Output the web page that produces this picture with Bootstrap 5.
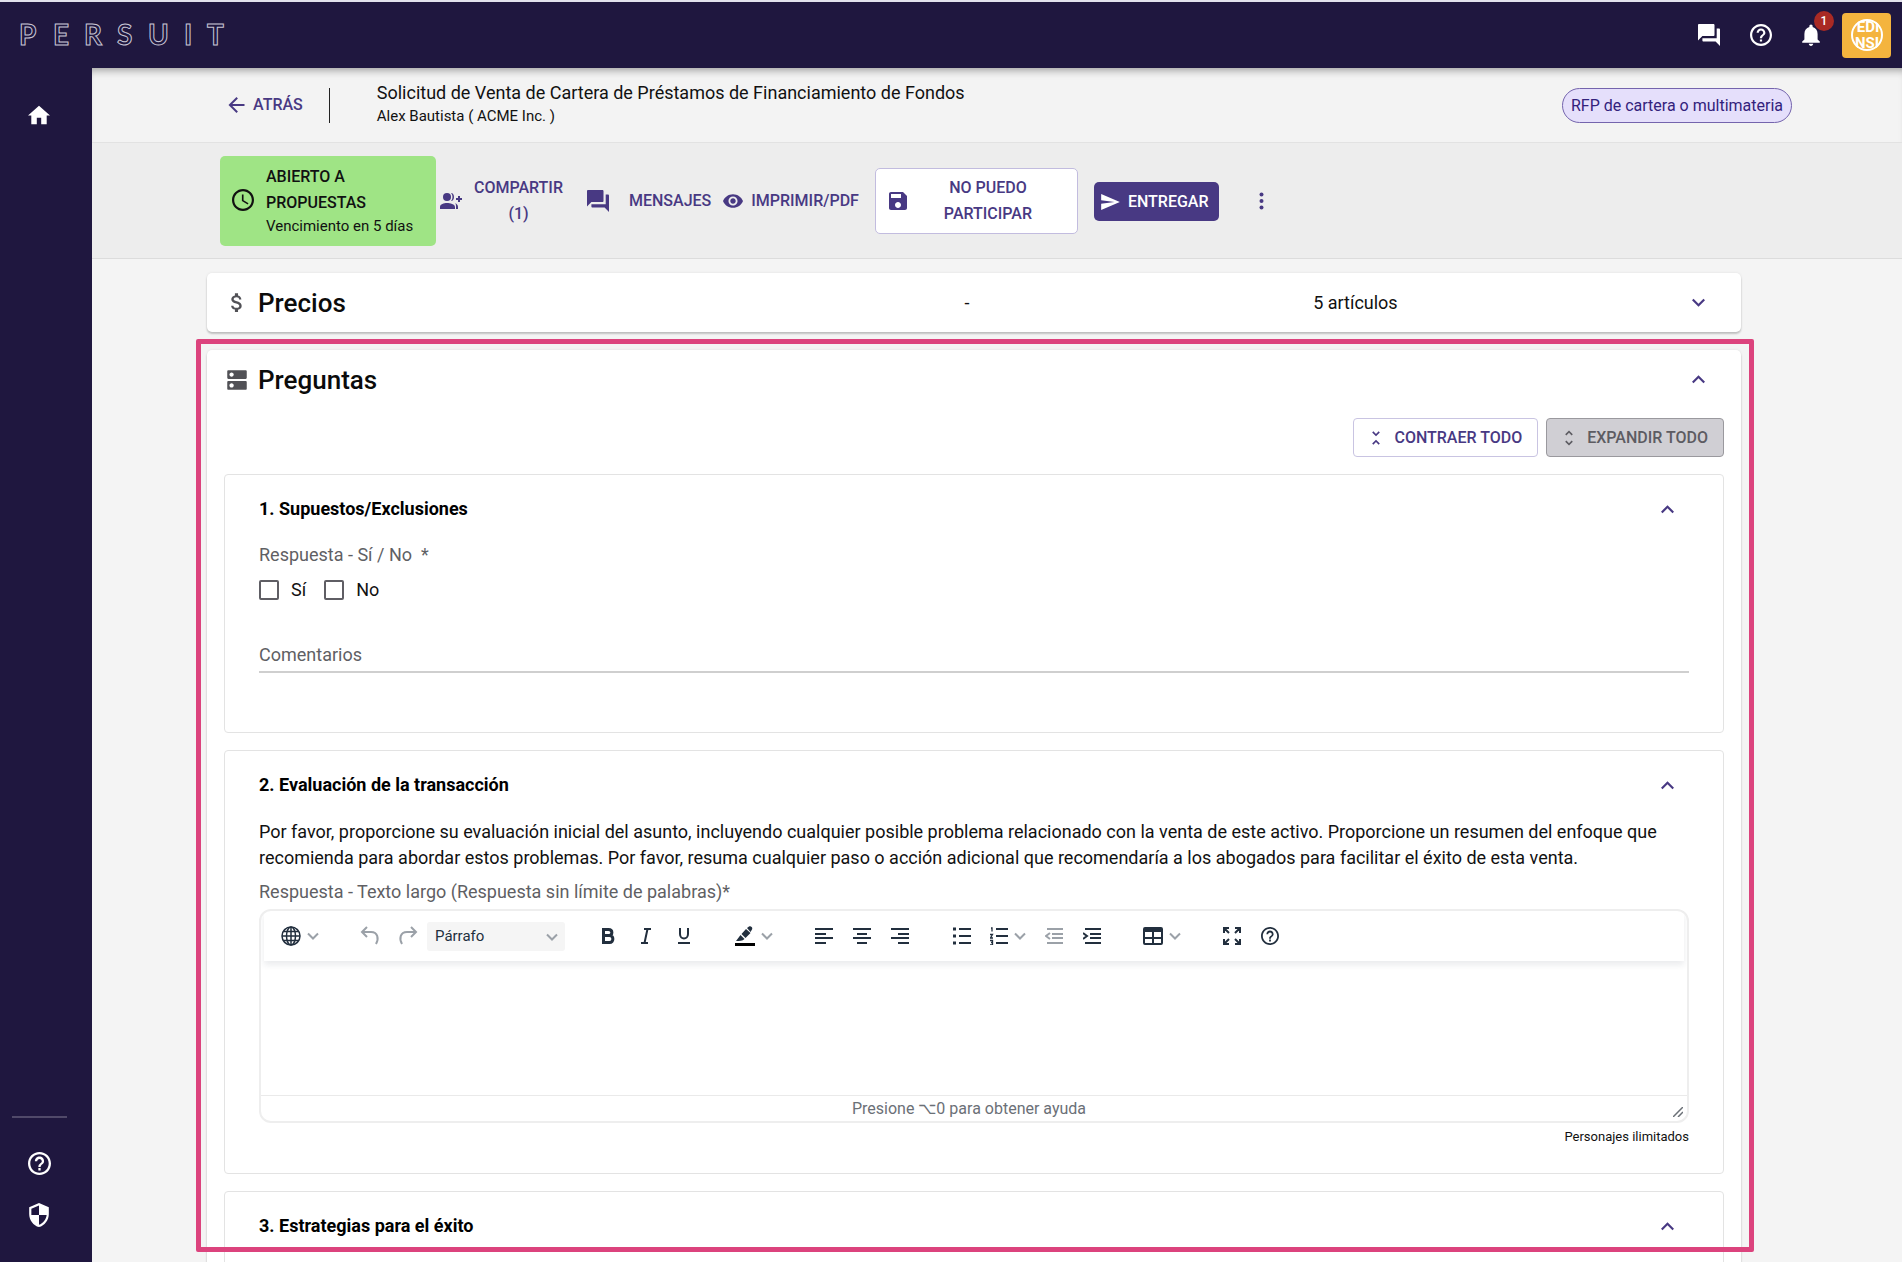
<!DOCTYPE html>
<html lang="es">
<head>
<meta charset="utf-8">
<meta name="viewport" content="width=device-width, initial-scale=1">
<title>Persuit</title>
<link href="https://cdn.jsdelivr.net/npm/bootstrap@5.3.0/dist/css/bootstrap.min.css" rel="stylesheet">
<style>
:root { --ink:#1f173f; --brand:#483983; --pink:#dc437d; --tool:#222f3e; }
body { font-family:Roboto,"Liberation Sans",sans-serif; font-size:18px; line-height:26px; color:#111; background:#f4f4f4; }
button, input, select, textarea { font-family:inherit; }
svg { display:block; flex:none; fill:currentColor; }
.app { height:100vh; border-top:2px solid #e2e1ec; border-bottom:2px solid #fff; overflow:hidden; }
.topbar { background:var(--ink); height:66px; padding:0 11px 0 16px; color:#fff; flex:none; }
.shell { flex:1; min-height:0; }
.top-icons { gap:22px; }
.plain { background:none; border:0; padding:0; color:inherit; }
.alerts { position:relative; }
.count { position:absolute; top:-13px; right:-14px; width:20px; height:20px; border-radius:50%; background:#a92a24; font-size:12px; line-height:20px; font-weight:500; text-align:center; }
.avatar-tile { width:49px; height:45px; border-radius:4px; background:#f4b43e; }
.side { width:92px; background:var(--ink); color:#fff; padding:37px 14px 35px 0; flex:none; }
.side hr { width:55px; margin:0 0 34px; border-color:#fff; opacity:.22; border-top-width:2px; }
.workspace { min-width:0; }
.headline { background:#f3f3f3; height:75px; padding:0 110px 0 136px; border-bottom:1px solid #e2e2e2; box-shadow:inset 0 8px 8px -6px rgba(0,0,0,.38); flex:none; }
.back-link { color:var(--brand); font-size:16px; font-weight:500; text-decoration:none; }
.rule { width:1px; height:35px; background:#222; margin:0 47px 0 26px; }
.sub { font-size:15px; line-height:20px; }
.chip { border:1px solid #7464ad; background:#e5dffb; color:#33227c; border-radius:18px; padding:4px 8px; font-size:16px; line-height:25px; }
.actions { background:#ededed; padding:13px 128px 12px; border-bottom:1px solid #dcdcdc; flex:none; color:var(--brand); font-size:16px; font-weight:500; }
.status { background:#9fe485; color:#111; border-radius:5px; width:216px; padding:8px 12px 10px; }
.status .sub { font-weight:400; }
.act { color:inherit; font-weight:500; font-size:16px; line-height:26px; background:none; border:0; padding:0; display:flex; align-items:center; }
.share { margin-right:20px; }
.messages { gap:20px; margin-right:12px; }
.act.outlined { background:#fff; border:1px solid #c2bcdf; border-radius:5px; width:203px; padding:6px 32px 6px 13px; }
.act.filled { background:var(--brand); color:#fff; border-radius:5px; padding:7px 10px 6px 7px; }
.content { position:relative; flex:1; min-height:0; overflow:hidden; padding:14px 161px 0 115px; }
.frame { position:absolute; top:80px; right:148px; bottom:10px; left:104px; border:5px solid var(--pink); border-radius:2px; pointer-events:none; }
.panel { background:#fff; border-radius:5px; box-shadow:0 2px 2px rgba(0,0,0,.2), 0 0 3px rgba(0,0,0,.08); }
.panel + .panel { margin-top:18px; }
.panel-head { height:59px; padding:0 36px 0 17px; }
.summary { display:grid; grid-template-columns:50% 23% 1fr auto; align-items:center; }
.panel h2 { font-size:26px; line-height:30px; font-weight:500; margin:0; color:#0b0b0b; }
.gray { color:#515156; }
.bulk { gap:8px; padding:9px 17px 17px; }
.violet { color:var(--brand); }
.toggle { border:1px solid #c9c4e2; border-radius:4px; background:#fff; color:var(--brand); font-size:16px; font-weight:500; line-height:26px; padding:6px 15px 5px 12px; display:flex; align-items:center; gap:8px; }
.toggle:disabled { background:#d0cfd4; border-color:#9a999e; color:#5d5c62; }
.question { border:1px solid #e3e3e3; border-radius:4px; padding:21px 34px; margin:0 17px 17px; }
.question h3 { font-size:18px; line-height:26px; font-weight:700; margin:0; color:#000; }
.q-head { padding-right:15px; }
.hint { color:#5f5f64; }
.answer { margin-top:20px; }
.ticks { gap:18px; margin-top:9px; }
.tick { appearance:none; width:20px; height:20px; border:2px solid #5f5e64; border-radius:2px; margin:0 12px 0 0; background:#fff; }
.field { display:grid; margin:36px 0 38px; }
.field > * { grid-area:1 / 1; }
.field label { pointer-events:none; line-height:32px; }
.comment { width:100%; border:0; border-bottom:2px solid #cfcfcf; padding:0; height:34px; background:none; color:inherit; }
.brief { margin:21px 0 8px; }
.editor { border:2px solid #eee; border-radius:12px; margin-top:4px; overflow:hidden; }
.tools { height:50px; padding-left:9px; color:var(--tool); box-shadow:0 4px 6px rgba(34,47,62,.09); gap:24px; margin:0 3px; position:relative; }
.tool { background:none; border:0; padding:0; width:38px; height:34px; display:flex; align-items:center; justify-content:center; color:inherit; }
.tool.split { width:54px; gap:6px; }
.tool:disabled { color:#9ba1a8; }
.chev { fill:none; stroke:#9ba1a8; stroke-width:2; }
.style-box { position:relative; }
.style-pick { appearance:none; display:block; width:138px; height:29px; border:0; border-radius:3px; background:#f5f5f5; color:var(--tool); font-size:15px; line-height:29px; padding:0 30px 0 8px; }
.style-box svg { position:absolute; right:7px; top:11px; pointer-events:none; }
.writing { display:block; width:100%; height:134px; border:0; resize:none; padding:12px; outline:0; background:none; }
.foot { border-top:1px solid #eaeaea; font-size:16px; line-height:25px; color:#6b7077; padding:0 4px; }
.resize { align-self:flex-end; margin-bottom:4px; }
.limit { font-size:13px; line-height:26px; margin:1px 0 2px; }
.line { fill:none; stroke:currentColor; stroke-width:2; }
.last { margin-bottom:0; padding-bottom:120px; }
</style>
<script src="https://cdn.jsdelivr.net/npm/bootstrap@5.3.0/dist/js/bootstrap.bundle.min.js"></script>
</head>
<body>
<svg width="0" height="0" class="position-absolute" aria-hidden="true">
<symbol id="chat" viewBox="2 2 20 20"><path d="M21 6h-2v9H6v2c0 .55.45 1 1 1h11l4 4V7c0-.55-.45-1-1-1zm-4 6V3c0-.55-.45-1-1-1H3c-.55 0-1 .45-1 1v14l4-4h10c.55 0 1-.45 1-1z"/></symbol>
<symbol id="help" viewBox="2 2 20 20"><path d="M11 18h2v-2h-2v2zm1-16C6.480 2 2 6.480 2 12s4.480 10 10 10 10-4.480 10-10S17.520 2 12 2zm0 18c-4.410 0-8-3.590-8-8s3.590-8 8-8 8 3.590 8 8-3.590 8-8 8zm0-14c-2.210 0-4 1.790-4 4h2c0-1.100.9-2 2-2s2 .9 2 2c0 2-3 1.750-3 5h2c0-2.250 3-2.500 3-5 0-2.210-1.790-4-4-4z"/></symbol>
<symbol id="up" viewBox="6 8 12 8"><path d="M12 8l-6 6 1.410 1.410L12 10.830l4.590 4.580L18 14z"/></symbol>
<symbol id="down" viewBox="6 8 12 8"><path d="M16.590 8.590 12 13.170 7.410 8.590 6 10l6 6 6-6z"/></symbol>
<symbol id="chev" viewBox="0 0 12 8"><path d="M1 1.500l5 5 5-5"/></symbol>
</svg>

<div class="app d-flex flex-column">
<header class="topbar d-flex align-items-center justify-content-between">
  <svg width="214" height="34" role="img" aria-label="PERSUIT"><text x="3 37 68 101 132 168 191" y="27" font-family="Lato" font-weight="700" font-size="28" fill="none" stroke="#c9c6d6" stroke-width="1">PERSUIT</text></svg>
  <div class="top-icons d-flex align-items-center">
    <button class="plain me-2" aria-label="Mensajes"><svg width="22" height="22"><use href="#chat"/></svg></button>
    <button class="plain me-2" aria-label="Ayuda"><svg width="22" height="22"><use href="#help"/></svg></button>
    <button class="plain alerts" aria-label="Notificaciones"><svg width="18" height="22" viewBox="4 2 16 20"><path d="M12 22c1.100 0 2-.9 2-2h-4c0 1.100.890 2 2 2zm6-6v-5c0-3.070-1.640-5.640-4.500-6.320V4c0-.830-.670-1.500-1.500-1.500s-1.500.670-1.500 1.500v.680C7.630 5.360 6 7.920 6 11v5l-2 2v1h16v-1l-2-2z"/></svg><span class="count">1</span></button>
    <button class="plain avatar-tile d-flex align-items-center justify-content-center" aria-label="Cuenta"><svg width="34" height="34" viewBox="0 0 34 34"><defs><clipPath id="disc"><circle cx="17" cy="17" r="16"/></clipPath></defs><circle cx="17" cy="17" r="15" fill="none" stroke="#fff" stroke-width="2"/><g clip-path="url(#disc)" fill="#fff" font-size="15" font-weight="700" text-anchor="middle"><text x="18" y="14">EDI</text><text x="17" y="30">NSI</text></g></svg></button>
  </div>
</header>

<div class="shell d-flex">
<nav class="side d-flex flex-column align-items-center">
  <a href="#" class="text-white" aria-label="Inicio"><svg width="22" height="20" viewBox="2 3 20 17"><path d="M10 20v-6h4v6h5v-8h3L12 3 2 12h3v8z"/></svg></a>
  <hr class="mt-auto">
  <a href="#" class="text-white mb-4" aria-label="Ayuda"><svg width="23" height="23"><use href="#help"/></svg></a>
  <a href="#" class="text-white pt-1" aria-label="Seguridad"><svg width="20" height="24" viewBox="3 1 18 22"><path d="M12 1 3 5v6c0 5.550 3.840 10.740 9 12 5.160-1.260 9-6.450 9-12V5l-9-4zm0 10.990h7c-.530 4.120-3.280 7.790-7 8.940V12H5V6.300l7-3.110v8.800z"/></svg></a>
</nav>

<main class="workspace flex-grow-1 d-flex flex-column">
  <div class="headline d-flex align-items-center">
    <a href="#" class="back-link d-flex align-items-center gap-2"><svg width="17" height="16" viewBox="4 4 16 16"><path d="M20 11H7.830l5.590-5.590L12 4l-8 8 8 8 1.410-1.410L7.830 13H20v-2z"/></svg>ATRÁS</a>
    <div class="rule"></div>
    <div class="pb-1">
      <div>Solicitud de Venta de Cartera de Préstamos de Financiamiento de Fondos</div>
      <div class="sub">Alex Bautista ( ACME Inc. )</div>
    </div>
    <span class="chip ms-auto">RFP de cartera o multimateria</span>
  </div>

  <div class="actions d-flex align-items-center">
    <div class="status d-flex align-items-center">
      <svg width="22" height="22" viewBox="2 2 20 20" class="me-2"><path d="M11.990 2C6.470 2 2 6.480 2 12s4.470 10 9.990 10C17.520 22 22 17.520 22 12S17.520 2 11.990 2zM12 20c-4.420 0-8-3.580-8-8s3.580-8 8-8 8 3.580 8 8-3.580 8-8 8zm.5-13H11v6l5.250 3.150.750-1.230-4.500-2.670z"/></svg>
      <div class="ps-1">ABIERTO A<br>PROPUESTAS<div class="sub">Vencimiento en 5 días</div></div>
    </div>
    <button class="act share ms-1"><svg width="22" height="16" viewBox="0 0 22 16" class="me-2"><circle cx="7" cy="4" r="4"/><path d="M0 16v-2c0-3 4-4 7-4s8 1 8 4v2zM11 0c4 0 4 8 0 8 2-2 2-6 0-8zM15 10c2 1 3 2 3 4v2h-2v-2c0-2 0-3-1-4zM18 3h2v2h2v2h-2v2h-2V7h-2V5h2z"/></svg><span class="px-1">COMPARTIR<br>(1)</span></button>
    <button class="act messages"><svg width="22" height="22"><use href="#chat"/></svg>MENSAJES</button>
    <button class="act me-3"><svg width="20" height="14" viewBox="1 4.500 22 15" class="me-2"><path d="M12 4.500C7 4.500 2.730 7.610 1 12c1.730 4.390 6 7.500 11 7.500s9.270-3.110 11-7.500c-1.730-4.390-6-7.500-11-7.500zM12 17c-2.760 0-5-2.240-5-5s2.240-5 5-5 5 2.240 5 5-2.240 5-5 5zm0-8c-1.660 0-3 1.340-3 3s1.340 3 3 3 3-1.340 3-3-1.340-3-3-3z"/></svg>IMPRIMIR/PDF</button>
    <button class="act outlined me-3"><svg width="18" height="18" viewBox="3 3 18 18"><path d="M17 3H5c-1.110 0-2 .9-2 2v14c0 1.100.890 2 2 2h14c1.100 0 2-.9 2-2V7l-4-4zm-5 16c-1.660 0-3-1.340-3-3s1.340-3 3-3 3 1.340 3 3-1.340 3-3 3zm3-10H5V5h10v4z"/></svg><span class="flex-grow-1 ps-4">NO PUEDO<br>PARTICIPAR</span></button>
    <button class="act filled"><svg width="19" height="16" viewBox="2 3 21 18" class="me-2"><path d="M2.010 21 23 12 2.010 3 2 10l15 2-15 2z"/></svg>ENTREGAR</button>
    <button class="act ms-4 px-3" aria-label="Más opciones"><svg width="5" height="18" viewBox="0 0 5 18"><circle cx="2.500" cy="2.500" r="2"/><circle cx="2.500" cy="9" r="2"/><circle cx="2.500" cy="15.500" r="2"/></svg></button>
  </div>

  <div class="content">
    <section class="panel panel-head summary">
      <div class="d-flex align-items-center">
        <svg width="26" height="25" viewBox="0 0 24 24" class="gray me-2"><path d="M11.800 10.900c-2.270-.590-3-1.200-3-2.150 0-1.090 1.010-1.850 2.700-1.850 1.780 0 2.440.850 2.500 2.100h2.210c-.070-1.720-1.120-3.300-3.210-3.810V3h-3v2.160c-1.940.420-3.500 1.680-3.500 3.610 0 2.310 1.910 3.460 4.700 4.130 2.500.6 3 1.480 3 2.410 0 .690-.490 1.790-2.700 1.790-2.060 0-2.870-.920-2.980-2.100h-2.200c.120 2.190 1.760 3.420 3.680 3.830V21h3v-2.150c1.950-.370 3.500-1.500 3.500-3.550 0-2.840-2.430-3.810-4.700-4.400z"/></svg>
        <h2>Precios</h2>
      </div>
      <span>-</span>
      <span class="ps-2">5 artículos</span>
      <button class="plain violet" aria-label="Expandir Precios"><svg width="13" height="9"><use href="#down"/></svg></button>
    </section>

    <section class="panel">
      <div class="panel-head d-flex align-items-center">
        <svg width="26" height="26" viewBox="0 0 24 24" class="gray me-2"><path d="M20 13H4c-.550 0-1 .450-1 1v6c0 .550.450 1 1 1h16c.550 0 1-.450 1-1v-6c0-.550-.450-1-1-1zM7 19c-1.100 0-2-.9-2-2s.9-2 2-2 2 .9 2 2-.9 2-2 2zM20 3H4c-.550 0-1 .450-1 1v6c0 .550.450 1 1 1h16c.550 0 1-.450 1-1V4c0-.550-.450-1-1-1zM7 9c-1.100 0-2-.9-2-2s.9-2 2-2 2 .9 2 2-.9 2-2 2z"/></svg>
        <h2>Preguntas</h2>
        <button class="plain violet ms-auto" aria-label="Contraer Preguntas"><svg width="13" height="9"><use href="#up"/></svg></button>
      </div>
      <div class="bulk d-flex justify-content-end">
        <button class="toggle"><svg width="20" height="20" viewBox="0 0 24 24"><path d="M7.410 18.590 8.830 20 12 16.830 15.170 20l1.410-1.410L12 14l-4.590 4.590zm9.180-13.180L15.170 4 12 7.170 8.830 4 7.410 5.410 12 10l4.590-4.590z"/></svg>CONTRAER TODO</button>
        <button class="toggle" disabled><svg width="20" height="20" viewBox="0 0 24 24"><path d="M12 5.830 15.170 9l1.410-1.410L12 3 7.410 7.590 8.830 9 12 5.830zm0 12.340L8.830 15l-1.410 1.410L12 21l4.590-4.590L15.170 15 12 18.170z"/></svg>EXPANDIR TODO</button>
      </div>

      <article class="question">
        <div class="q-head d-flex align-items-center justify-content-between">
          <h3>1. Supuestos/Exclusiones</h3>
          <button class="plain violet" aria-label="Contraer pregunta 1"><svg width="13" height="9"><use href="#up"/></svg></button>
        </div>
        <div class="hint answer">Respuesta - Sí / No &nbsp;*</div>
        <div class="ticks d-flex">
          <div class="d-flex align-items-center"><input class="tick" type="checkbox" id="yes"><label for="yes">Sí</label></div>
          <div class="d-flex align-items-center"><input class="tick" type="checkbox" id="no"><label for="no">No</label></div>
        </div>
        <div class="field">
          <input class="comment" id="notes" type="text">
          <label for="notes" class="hint">Comentarios</label>
        </div>
      </article>

      <article class="question">
        <div class="q-head d-flex align-items-center justify-content-between">
          <h3>2. Evaluación de la transacción</h3>
          <button class="plain violet" aria-label="Contraer pregunta 2"><svg width="13" height="9"><use href="#up"/></svg></button>
        </div>
        <p class="brief">Por favor, proporcione su evaluación inicial del asunto, incluyendo cualquier posible problema relacionado con la venta de este activo. Proporcione un resumen del enfoque que recomienda para abordar estos problemas. Por favor, resuma cualquier paso o acción adicional que recomendaría a los abogados para facilitar el éxito de esta venta.</p>
        <label for="long" class="hint d-block">Respuesta - Texto largo (Respuesta sin límite de palabras)*</label>
        <div class="editor">
          <div class="tools d-flex align-items-center">
            <button class="tool split" aria-label="Idioma"><svg width="20" height="20" viewBox="0 0 20 20" class="line"><g stroke-width="1.500"><circle cx="10" cy="10" r="9"/><ellipse cx="10" cy="10" rx="4.500" ry="9"/><path d="M10 1v18M1 10h18M2.500 5.500h15M2.500 14.500h15"/></g></svg><svg width="12" height="8" class="chev"><use href="#chev"/></svg></button>
            <div class="d-flex align-items-center">
              <button class="tool" disabled aria-label="Deshacer"><svg class="line" width="20" height="20" viewBox="0 0 20 20"><path d="M7 1 2 6l5 5M2 6h9c7 0 8 7 5 12"/></svg></button>
              <button class="tool" disabled aria-label="Rehacer"><svg class="line" width="20" height="20" viewBox="0 0 20 20"><path d="m13 1 5 5-5 5M18 6H9C2 6 1 13 4 18"/></svg></button>
              <div class="style-box"><select class="style-pick" aria-label="Estilo de texto"><option>Párrafo</option></select><svg width="12" height="8" class="chev"><use href="#chev"/></svg></div>
            </div>
            <div class="d-flex">
              <button class="tool" aria-label="Negrita"><svg class="line" width="14" height="16" viewBox="0 0 14 16"><path stroke-width="3" d="M2.500 1.500h5c4.500 0 4.500 6 0 6h-5zm0 6h6c4.500 0 4.500 7 0 7h-6z"/></svg></button>
              <button class="tool" aria-label="Cursiva"><svg class="line" width="10" height="16" viewBox="0 0 10 16"><path d="M3 1h7M0 15h7M6.500 1l-3 14"/></svg></button>
              <button class="tool" aria-label="Subrayado"><svg class="line" width="14" height="16" viewBox="0 0 14 16"><path d="M3 0v6c0 6 8 6 8 0V0M1 15h12"/></svg></button>
            </div>
            <button class="tool split" aria-label="Color de resaltado"><svg width="20" height="20" viewBox="0 0 20 20"><path fill="#000" d="M0 17h20v3H0z"/><path d="m12 2 2-1.500c2-1 4 1 3 3L15.500 6zM11 3l4.500 4-5 5-4-4zM5.500 9l4 4c-2 2-5 2-8.500 2z"/></svg><svg width="12" height="8" class="chev"><use href="#chev"/></svg></button>
            <div class="d-flex">
              <button class="tool" aria-label="Alinear a la izquierda"><svg class="line" width="18" height="18" viewBox="0 0 18 18"><path d="M0 2h18M0 7h11M0 11h18M0 16h11"/></svg></button>
              <button class="tool" aria-label="Centrar"><svg class="line" width="18" height="18" viewBox="0 0 18 18"><path d="M0 2h18M4 7h10M0 11h18M4 16h10"/></svg></button>
              <button class="tool" aria-label="Alinear a la derecha"><svg class="line" width="18" height="18" viewBox="0 0 18 18"><path d="M0 2h18M7 7h11M0 11h18M7 16h11"/></svg></button>
            </div>
            <div class="d-flex">
              <button class="tool" aria-label="Viñetas"><svg class="line" width="18" height="18" viewBox="0 0 18 18"><path d="M6 2h12M6 9h12M6 16h12"/><path stroke-width="3" d="M0 2h3M0 9h3M0 16h3"/></svg></button>
              <button class="tool split" aria-label="Numeración"><svg class="line" width="18" height="18" viewBox="0 0 18 18"><path d="M6 2h12M6 9h12M6 16h12"/><path stroke-width="1.300" d="M1 1h1v3.500M0 7.500h2.500L.500 11H3M0 13.500h2.500V18H0M1 15.500h1.500"/></svg><svg width="12" height="8" class="chev"><use href="#chev"/></svg></button>
              <button class="tool" disabled aria-label="Reducir sangría"><svg class="line" width="18" height="18" viewBox="0 0 18 18"><path d="M2 2h16M7 7h11M7 11h11M2 16h16M5 6 1 9l4 3"/></svg></button>
              <button class="tool" aria-label="Aumentar sangría"><svg class="line" width="18" height="18" viewBox="0 0 18 18"><path d="M2 2h16M7 7h11M7 11h11M2 16h16M0 6l4 3-4 3"/></svg></button>
            </div>
            <button class="tool split" aria-label="Tabla"><svg class="line" width="20" height="18" viewBox="0 0 20 18"><rect x="1" y="1" width="18" height="16" rx="1"/><path d="M1 3h18M1 4h18M10 4v13M1 11h18"/></svg><svg width="12" height="8" class="chev"><use href="#chev"/></svg></button>
            <div class="d-flex">
              <button class="tool" aria-label="Pantalla completa"><svg class="line" width="18" height="18" viewBox="0 0 18 18"><path d="M1 6V1h5M12 1h5v5M17 12v5h-5M6 17H1v-5M1 1l5 5M17 1l-5 5M17 17l-5-5M1 17l5-5"/></svg></button>
              <button class="tool" aria-label="Ayuda del editor"><svg width="18" height="18"><use href="#help"/></svg></button>
            </div>
          </div>
          <textarea class="writing" id="long"></textarea>
          <div class="foot d-flex align-items-center"><span class="flex-grow-1 text-center">Presione ⌥0 para obtener ayuda</span><svg class="line resize" width="10" height="10" viewBox="0 0 10 10"><path stroke-width="1.500" d="M0 10 10 0M5 10l5-5"/></svg></div>
        </div>
        <div class="limit text-end">Personajes ilimitados</div>
      </article>

      <article class="question last">
        <div class="q-head d-flex align-items-center justify-content-between">
          <h3>3. Estrategias para el éxito</h3>
          <button class="plain violet" aria-label="Contraer pregunta 3"><svg width="13" height="9"><use href="#up"/></svg></button>
        </div>
      </article>
    </section>
    <div class="frame"></div>
  </div>
</main>
</div>
</div>
</body>
</html>
